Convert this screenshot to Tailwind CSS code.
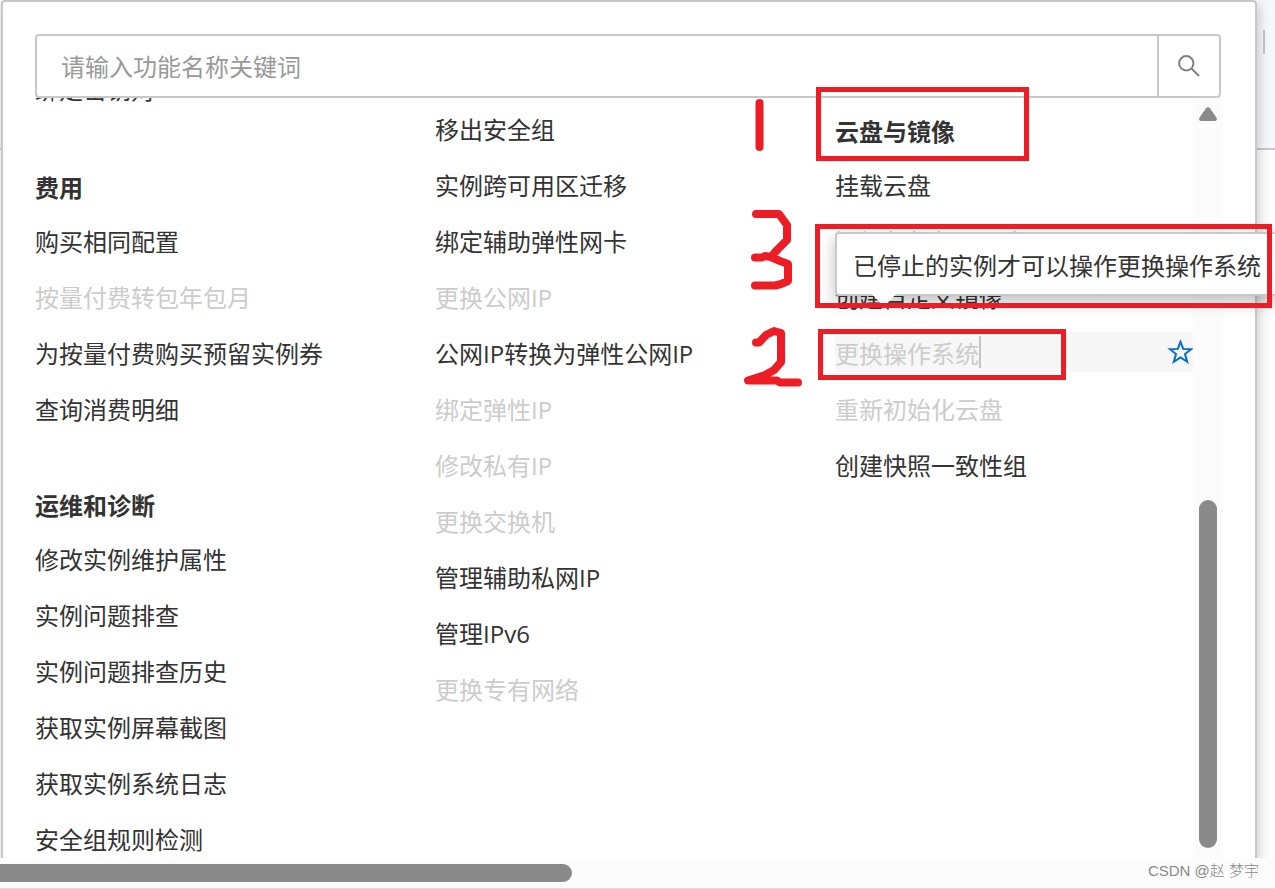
<!DOCTYPE html>
<html lang="zh-CN">
<head>
    <meta charset="UTF-8">
    <meta name="viewport" content="width=device-width, initial-scale=1.0">
    <title>实例操作</title>
    <script src="https://cdn.jsdelivr.net/npm/@tailwindcss/browser@4"></script>
</head>
<body class="bg-[#fdfdfd] font-['Open_Sans','Noto_Sans_CJK_SC',sans-serif] text-2xl text-[#333]">
    <div class="relative flex h-screen flex-col overflow-hidden">
        <!-- Page header behind the panel -->
        <div class="absolute inset-x-0 top-0 h-[150px] border-b-2 border-[#c8c8c8] bg-[#f7f8fb]">
            <div class="absolute right-[10px] top-[30px] h-6 w-[2px] bg-[#c8c8c8]"></div>
        </div>

        <!-- Menu panel -->
        <main class="relative ml-px mr-[18px] flex min-h-0 flex-1 flex-col rounded-t border-2 border-b-0 border-[#c8c8c8] bg-white px-8 pt-8 shadow-[2px_4px_12px_rgba(0,0,0,0.2)]">
            <form class="relative z-10 mr-[2px] flex h-16 shrink-0 rounded border-2 border-[#c8c8c8] bg-white">
                <input type="text" aria-label="功能名称" placeholder="请输入功能名称关键词" class="min-w-0 flex-1 px-6 pt-[2px] text-2xl outline-none placeholder:text-[#999]">
                <button type="button" aria-label="搜索" class="flex w-[62px] items-center justify-center border-l-2 border-[#c8c8c8]">
                    <svg class="h-6 w-6" viewBox="0 0 24 24" fill="none" stroke="#808080" stroke-width="2">
                        <circle cx="9.3" cy="9.3" r="7.2"/>
                        <path d="M14.5 14.5 22 22"/>
                    </svg>
                </button>
            </form>

            <div class="flex min-h-0 flex-1 overflow-hidden">
                <div class="grid flex-1 grid-cols-[400px_400px_1fr] items-start whitespace-nowrap leading-[44px]">
                    <div class="-mt-[30px]">
                        <ul class="pb-[58px]">
                            <li class="h-10"><a href="#">绑定密钥对</a></li>
                        </ul>
                        <h3 class="mb-[14px] h-10 font-bold">费用</h3>
                        <ul class="flex flex-col gap-4 pb-14">
                            <li class="h-10"><a href="#">购买相同配置</a></li>
                            <li class="h-10 text-[#ccc]">按量付费转包年包月</li>
                            <li class="h-10"><a href="#">为按量付费购买预留实例券</a></li>
                            <li class="h-10"><a href="#">查询消费明细</a></li>
                        </ul>
                        <h3 class="mb-[14px] h-10 font-bold">运维和诊断</h3>
                        <ul class="flex flex-col gap-4">
                            <li class="h-10"><a href="#">修改实例维护属性</a></li>
                            <li class="h-10"><a href="#">实例问题排查</a></li>
                            <li class="h-10"><a href="#">实例问题排查历史</a></li>
                            <li class="h-10"><a href="#">获取实例屏幕截图</a></li>
                            <li class="h-10"><a href="#">获取实例系统日志</a></li>
                            <li class="h-10"><a href="#">安全组规则检测</a></li>
                        </ul>
                    </div>

                    <ul class="flex flex-col gap-4 pt-[10px]">
                        <li class="h-10"><a href="#">移出安全组</a></li>
                        <li class="h-10"><a href="#">实例跨可用区迁移</a></li>
                        <li class="h-10"><a href="#">绑定辅助弹性网卡</a></li>
                        <li class="h-10 text-[#ccc]">更换公网IP</li>
                        <li class="h-10"><a href="#">公网IP转换为弹性公网IP</a></li>
                        <li class="h-10 text-[#ccc]">绑定弹性IP</li>
                        <li class="h-10 text-[#ccc]">修改私有IP</li>
                        <li class="h-10 text-[#ccc]">更换交换机</li>
                        <li class="h-10"><a href="#">管理辅助私网IP</a></li>
                        <li class="h-10"><a href="#">管理IPv6</a></li>
                        <li class="h-10 text-[#ccc]">更换专有网络</li>
                    </ul>

                    <div class="pt-3">
                        <h3 class="mb-[14px] h-10 font-bold">云盘与镜像</h3>
                        <ul class="flex flex-col gap-4">
                            <li class="h-10"><a href="#">挂载云盘</a></li>
                            <li class="h-10 text-[#ccc]">添加包年包月云盘</li>
                            <li class="h-10"><a href="#">创建自定义镜像</a></li>
                            <li class="flex h-10 bg-[#f7f7f7] text-[#ccc]">
                                更换操作系统
                                <span class="h-8 w-[2px] self-center bg-[#c4c4c4]"></span>
                                <button type="button" aria-label="收藏" class="ml-auto">
                                    <svg class="h-[26px] w-[26px]" viewBox="0 0 26 26" fill="none" stroke="#0070cc" stroke-width="2">
                                        <path d="M13.500 2.800 16.200 9.900 24 10.200 18 15 20.200 22.800 13.500 18.500 6.800 22.800 9 15 3 10.200 10.800 9.900Z"/>
                                    </svg>
                                </button>
                            </li>
                            <li class="h-10 text-[#ccc]">重新初始化云盘</li>
                            <li class="h-10"><a href="#">创建快照一致性组</a></li>
                        </ul>
                    </div>
                </div>

                <!-- Vertical scrollbar -->
                <div class="flex w-[30px] flex-col items-center justify-between bg-[#fcfcfc] pb-[10px] pt-[9px]">
                    <svg class="h-[14px] w-[18px]" viewBox="0 0 18 14" fill="#8a8a8a">
                        <path d="M7 1.2Q9-.8 11 1.2L17.4 10.5Q18.8 13.8 15.8 14H2.2Q-.8 13.8 .6 10.5Z"/>
                    </svg>
                    <div class="h-[348px] w-[18px] rounded-full bg-[#8a8a8a]"></div>
                </div>
            </div>
        </main>

        <!-- Horizontal scrollbar -->
        <footer class="relative flex h-[31px] shrink-0 items-center justify-between border-b border-[#dedede] bg-[#fcfcfc] pr-4">
            <div class="h-[18px] w-[572px] rounded-r-full bg-[#8a8a8a]"></div>
            <span class="pb-1 font-['Liberation_Sans','Noto_Sans_CJK_SC',sans-serif] text-[15px] font-light text-[#888]">CSDN @赵 梦宇</span>
        </footer>

        <!-- Tooltip -->
        <div role="tooltip" class="absolute left-[835px] top-[232px] h-16 whitespace-nowrap rounded border-2 border-[#c8c8c8] bg-white px-4 leading-[64px] shadow-[0_6px_16px_rgba(0,0,0,0.25)]">
            已停止的实例才可以操作更换操作系统
            <svg class="absolute left-[34px] top-[59px] h-[14px] w-[26px]" viewBox="0 0 26 14">
                <path d="M0 0H26L13 14Z" fill="#fff"/>
            </svg>
        </div>

        <!-- Red marks -->
        <div class="absolute left-[816px] top-[87px] z-20 h-[74px] w-[213px] border-5 border-[#ee1c25]"></div>
        <div class="absolute left-[815px] top-[224px] z-20 h-[84px] w-[457px] border-5 border-[#ee1c25]"></div>
        <div class="absolute left-[818px] top-[329px] z-20 h-[51px] w-[248px] border-5 border-[#ee1c25]"></div>
        <svg class="absolute left-[740px] top-[90px] z-20 h-[300px] w-[70px]" viewBox="740 90 70 300" fill="none" stroke="#ee1c25" stroke-width="8" stroke-linecap="round" stroke-linejoin="round">
            <path d="M759.5 103V147"/>
            <path d="M756 214H779L787 225V240L778 249 771 257 765 256 762 257.5H755M771 257 780 261 788 264V281L781 284 775 285.5H755"/>
            <path d="M756 342.5H759L766 335 774 331 781 333V362L774 370 765 375 748 380.5H777L780 382.500H798"/>
        </svg>
    </div>
</body>
</html>
